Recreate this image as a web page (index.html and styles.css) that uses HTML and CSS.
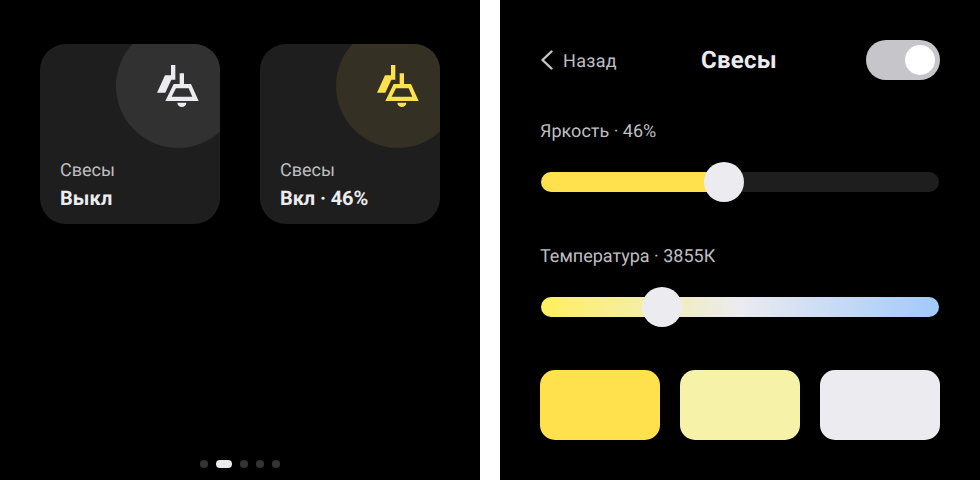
FILE: index.html
```html
<!DOCTYPE html>
<html lang="ru">
<head>
<meta charset="utf-8">
<title>Свесы</title>
<link rel="stylesheet" href="styles.css">
</head>
<body>
<main class="screens">
  <section class="screen home">
    <div class="cards">
      <article class="card">
        <div class="halo"></div>
        <svg class="lamp" viewBox="0 0 126 126"><path d="M42 0h13v44H43L25 83H0l24-52h18zM68 25h13v32h21l23 51H25l25-51h18zM57 70 44 95h62L95 70zM61 113h27a13.5 13 0 0 1-27 0z" fill-rule="evenodd"/></svg>
        <div class="name">Свесы</div>
        <div class="state">Выкл</div>
      </article>
      <article class="card card-on">
        <div class="halo"></div>
        <svg class="lamp" viewBox="0 0 126 126"><path d="M42 0h13v44H43L25 83H0l24-52h18zM68 25h13v32h21l23 51H25l25-51h18zM57 70 44 95h62L95 70zM61 113h27a13.5 13 0 0 1-27 0z" fill-rule="evenodd"/></svg>
        <div class="name">Свесы</div>
        <div class="state">Вкл · 46%</div>
      </article>
    </div>
    <nav class="dots"><i></i><i class="active"></i><i></i><i></i><i></i></nav>
  </section>
  <section class="screen detail">
    <header class="bar">
      <div class="back">
        <svg class="chevron" viewBox="0 0 13 20"><path d="M11.5 1.5 2.5 10l9 8.5"/></svg>
        <span>Назад</span>
      </div>
      <h1>Свесы</h1>
      <div class="toggle"><span></span></div>
    </header>
    <div class="control">
      <div class="label">Яркость · 46%</div>
      <div class="track brightness"><div class="fill"></div><div class="knob"></div></div>
    </div>
    <div class="control">
      <div class="label">Температура · 3855К</div>
      <div class="track temperature"><div class="knob"></div></div>
    </div>
    <div class="presets">
      <div class="preset warm"></div>
      <div class="preset soft"></div>
      <div class="preset cold"></div>
    </div>
  </section>
</main>
</body>
</html>
```
FILE: styles.css
```css
* { box-sizing: border-box; }
body { margin: 0; background: #fff; font-family: Roboto, "Noto Sans", sans-serif; text-rendering: geometricPrecision; }
.screens { display: flex; gap: 20px; width: 980px; height: 480px; }
.screen { width: 480px; height: 480px; background: #000; }

.home { display: flex; flex-direction: column; justify-content: space-between; align-items: center; padding: 44px 40px 12px; }
.cards { display: flex; gap: 40px; }
.card { position: relative; overflow: hidden; display: flex; flex-direction: column; justify-content: flex-end; width: 180px; height: 180px; padding: 0 20px 12px; border-radius: 26px; background: #1e1e1e; }
.halo { position: absolute; left: 76px; top: -20px; width: 124px; height: 124px; border-radius: 50%; background: #313131; }
.lamp { position: absolute; left: 117.2px; top: 21.2px; width: 42px; height: 42px; fill: #ebebf0; }
.name { position: relative; padding-top: 2px; font-size: 18px; line-height: 26px; color: #bfbfc2; }
.state { position: relative; font-size: 20px; line-height: 28px; font-weight: 700; color: #ebebf0; letter-spacing: -0.1px; }
.card:not(.card-on) .state { letter-spacing: 0.1px; }
.card-on .halo { background: #343023; }
.card-on .lamp { fill: #ffe04d; }
.dots { display: flex; gap: 8px; }
.dots i { width: 8px; height: 8px; border-radius: 4px; background: #333; }
.dots .active { width: 16px; background: #ebebf0; }

.detail { padding: 40px 40px 0; }
.bar { display: grid; grid-template-columns: 1fr auto 1fr; align-items: center; height: 40px; }
.back { display: flex; align-items: center; gap: 10px; font-size: 18px; line-height: 28px; color: #bfbfc2; letter-spacing: 0.3px; }
.back span { padding-top: 3px; }
.chevron { width: 13px; height: 20px; fill: none; stroke: #c6c6ca; stroke-width: 2.4; stroke-linecap: round; stroke-linejoin: round; }
h1 { margin: 0 2px 0 0; font-size: 24px; line-height: 40px; font-weight: 700; color: #ebebf0; letter-spacing: 0.3px; }
.toggle { display: flex; align-items: center; justify-content: flex-end; justify-self: end; width: 74px; height: 40px; padding-right: 5px; border-radius: 20px; background: #c6c6ca; }
.toggle span { width: 30px; height: 30px; border-radius: 50%; background: #fff; }
.control { height: 125px; padding-top: 37px; }
.label { padding-top: 2px; font-size: 18px; line-height: 26px; color: #bfbfc2; }
.track { display: flex; align-items: center; width: 398px; height: 20px; margin: 27px 0 0 1px; border-radius: 10px; }
.brightness { background: #1e1e1e; }
.fill { width: 183px; height: 20px; border-radius: 10px 0 0 10px; background: #ffe04d; }
.knob { flex: none; width: 40px; height: 40px; border-radius: 50%; background: #ebebf0; }
.brightness .knob { margin-left: -20px; }
.temperature { background: linear-gradient(90deg, #fff05c 0%, #ebebf0 50%, #a1c9fa 100%); }
.temperature .knob { margin-left: 101px; }
.presets { display: grid; grid-template-columns: repeat(3, 1fr); gap: 20px; margin-top: 40px; }
.preset { height: 70px; border-radius: 15px; }
.warm { background: #ffe04d; }
.soft { background: #f6f3a9; }
.cold { background: #ebebf0; }
```
